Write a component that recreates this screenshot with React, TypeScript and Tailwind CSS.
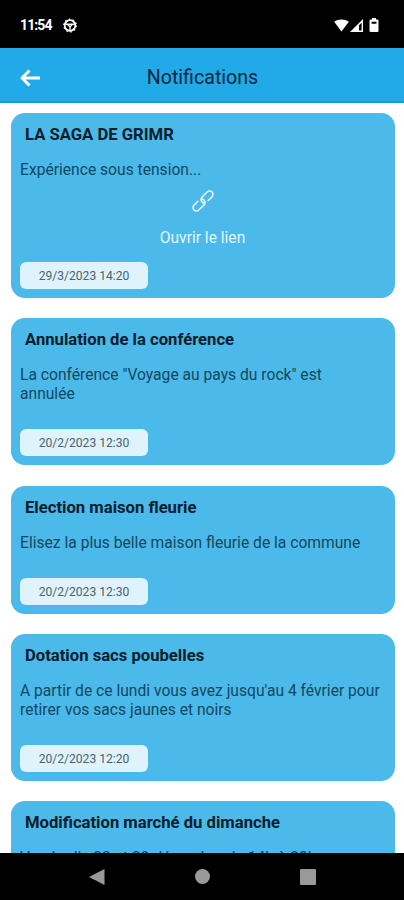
import type { ReactNode } from 'react'

type Notification = {
  title: string
  body: string
  date: string
  link?: boolean
}

const notifications: Notification[] = [
  { title: 'LA SAGA DE GRIMR', body: 'Expérience sous tension...', date: '29/3/2023 14:20', link: true },
  { title: 'Annulation de la conférence', body: 'La conférence "Voyage au pays du rock" est\nannulée', date: '20/2/2023 12:30' },
  { title: 'Election maison fleurie', body: 'Elisez la plus belle maison fleurie de la commune', date: '20/2/2023 12:30' },
  { title: 'Dotation sacs poubelles', body: "A partir de ce lundi vous avez jusqu'au 4 février pour\nretirer vos sacs jaunes et noirs", date: '20/2/2023 12:20' },
  { title: 'Modification marché du dimanche', body: 'Vendredis 22 et 29 décembre de 14h à 20h', date: '20/2/2023 12:20' },
]

function StatusBar() {
  return (
    <div className="flex h-12 shrink-0 items-center bg-black pl-[20px] pr-[25px] pt-0.5 text-white">
      <span className="w-[30px] text-[14px] font-bold leading-4 tracking-[-0.9px]">11:54</span>
      <svg className="ml-[13px]" width="14" height="15" viewBox="0 0 14 15" fill="none" stroke="currentColor">
        <circle cx="7" cy="7.5" r="5.3" strokeWidth="1.8" />
        <circle cx="7" cy="7.5" r="6.3" strokeWidth="1.2" strokeDasharray="1.6 2.35" />
        <path d="M2.5 6.3h9M4.8 6.8l2.2 2 2.2-2M7 8.8v3.7" strokeWidth="1.4" />
      </svg>
      <div className="ml-auto flex items-center">
        <svg width="15" height="13" viewBox="0 0 15 13" fill="currentColor">
          <path d="M.2 2.7C4.3-.3 10.7-.3 14.8 2.7L7.5 12.5z" />
        </svg>
        <svg className="ml-px" width="13" height="13" viewBox="0 0 13 13" fill="currentColor">
          <path fillRule="evenodd" d="M0 13L13 0v13zM9 6.300v5.200h2.600V3.700z" />
        </svg>
        <svg className="ml-1.5" width="10" height="14" viewBox="0 0 10 14" fill="currentColor">
          <path fillRule="evenodd" d="M3 0h4v1.500h1.300q1.200 0 1.200 1.200v10q0 1.300-1.200 1.300H1.700Q.5 14 .5 12.700v-10q0-1.200 1.200-1.200H3zM2.600 3.700v2h4.800v-2z" />
        </svg>
      </div>
    </div>
  )
}

function Header() {
  return (
    <header className="grid h-[55px] shrink-0 grid-cols-[60px_1fr_60px] items-center border-b-2 border-[#109fe2] bg-[#21a9e8] pt-1">
      <button className="pl-5 pt-0.5 text-white" aria-label="Retour">
        <svg width="21" height="18" viewBox="0 0 21 18" fill="none" stroke="currentColor" strokeWidth="2.900">
          <path d="M9.500 1.500L2 9l7.500 7.500M2 9h18" strokeLinejoin="round" />
        </svg>
      </button>
      <h1 className="pl-px pt-0.5 text-center text-[19.600px] leading-6 text-[#06283a]">Notifications</h1>
    </header>
  )
}

function LinkBlock() {
  return (
    <div className="-mb-[11.700px] flex flex-col items-center pt-[10px] text-[#e4f6ff]">
      <svg width="24" height="24" viewBox="-12 -12 24 24" fill="none" stroke="currentColor" strokeWidth="1.600" strokeLinecap="round">
        <g transform="rotate(-45)">
          <path d="M3.800 3.400H9.300A3.400 3.400 0 0 0 9.300-3.400H2A3.400 3.400 0 0 0-.8 1.900" />
          <path d="M-3.800-3.400H-9.300A3.400 3.400 0 0 0-9.300 3.400H-2A3.400 3.400 0 0 0 .8-1.900" />
        </g>
      </svg>
      <span className="mt-[15.500px] text-[15.600px] leading-[19px]">Ouvrir le lien</span>
    </div>
  )
}

function Card({ title, date, children, link }: { title: string; date: string; children: ReactNode; link?: boolean }) {
  return (
    <article className="shrink-0 rounded-[14px] bg-[#4bb9e9] px-[9.500px] pb-[9px] pt-3">
      <h2 className="ml-[5px] text-[16.650px] font-bold leading-[19px] text-[#07202c]">{title}</h2>
      <p className="mt-[17px] whitespace-pre-line text-[15.640px] leading-[18.600px] text-[#144860]">{children}</p>
      {link && <LinkBlock />}
      <div className="mt-[25.700px] flex h-[27px] w-32 items-center justify-center rounded-[6px] bg-[#dff3fd] pt-px text-[12.100px] text-[#4c626d]">
        {date}
      </div>
    </article>
  )
}

function NavBar() {
  return (
    <nav className="flex h-[47px] shrink-0 items-center justify-center gap-[90px] bg-black text-[#999]">
      <svg width="16" height="16" viewBox="0 0 16 16" fill="currentColor"><path d="M0 8L15.500 0v16z" /></svg>
      <span className="size-[15px] rounded-full bg-[#999]" />
      <span className="size-[16px] rounded-[1px] bg-[#999]" />
    </nav>
  )
}

export default function App() {
  return (
    <div className="flex h-[900px] w-[404px] flex-col overflow-hidden bg-white font-['Roboto',sans-serif]">
      <StatusBar />
      <Header />
      <main className="flex min-h-0 flex-1 flex-col gap-[20.400px] overflow-hidden pl-[10.500px] pr-[9.500px] pt-[9.800px]">
        {notifications.map((item) => (
          <Card key={item.title} title={item.title} date={item.date} link={item.link}>
            {item.body}
          </Card>
        ))}
      </main>
      <NavBar />
    </div>
  )
}
